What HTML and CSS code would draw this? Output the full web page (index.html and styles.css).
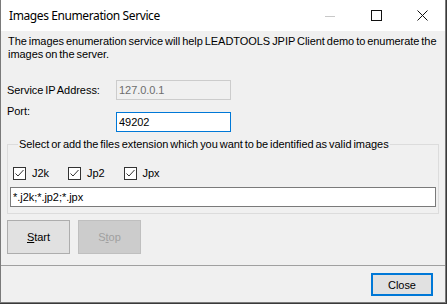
FILE: index.html
```html
<!DOCTYPE html>
<html lang="en">
<head>
  <meta charset="UTF-8">
  <title>Images Enumeration Service</title>
  <link rel="stylesheet" href="styles.css">
</head>
<body>
  <div class="window">
    <div class="titlebar">
      <span class="title">Images Enumeration Service</span>
      <div class="caption-buttons">
        <span class="caption-btn disabled">
          <svg width="10" height="10" viewBox="0 0 10 10"><path d="M0 5.5h10" stroke="currentColor" stroke-width="1"/></svg>
        </span>
        <span class="caption-btn">
          <svg width="11" height="11" viewBox="0 0 11 11"><rect x="0.5" y="0.5" width="10" height="10" fill="none" stroke="currentColor" stroke-width="1"/></svg>
        </span>
        <span class="caption-btn">
          <svg width="11" height="11" viewBox="0 0 11 11"><path d="M0.5 0.5l10 10M10.5 0.5l-10 10" stroke="currentColor" stroke-width="1"/></svg>
        </span>
      </div>
    </div>

    <div class="content">
      <p class="intro">The images enumeration service will help LEADTOOLS JPIP Client demo to enumerate the images on the server.</p>

      <div class="field field-ip">
        <label class="field-label">Service IP Address:</label>
        <input class="text-input disabled" type="text" value="127.0.0.1" disabled>
      </div>

      <div class="field field-port">
        <label class="field-label">Port:</label>
        <input class="text-input focused" type="text" value="49202">
      </div>

      <fieldset class="group">
        <legend>Select or add the files extension which you want to be identified as valid images</legend>
        <div class="checks">
          <label class="check"><span class="box"><svg width="11" height="11" viewBox="0 0 11 11"><path d="M1.5 5.5l2.5 2.5 5.5-6" fill="none" stroke="#333" stroke-width="1"/></svg></span>J2k</label>
          <label class="check"><span class="box"><svg width="11" height="11" viewBox="0 0 11 11"><path d="M1.5 5.5l2.5 2.5 5.5-6" fill="none" stroke="#333" stroke-width="1"/></svg></span>Jp2</label>
          <label class="check"><span class="box"><svg width="11" height="11" viewBox="0 0 11 11"><path d="M1.5 5.5l2.5 2.5 5.5-6" fill="none" stroke="#333" stroke-width="1"/></svg></span>Jpx</label>
        </div>
        <input class="text-input ext-input" type="text" value="*.j2k;*.jp2;*.jpx">
      </fieldset>

      <div class="actions">
        <button class="btn"><u>S</u>tart</button>
        <button class="btn btn-disabled" disabled>S<u>t</u>op</button>
      </div>
    </div>

    <div class="footer">
      <button class="btn btn-close">Close</button>
    </div>
  </div>
</body>
</html>
```

FILE: styles.css
```css
* {
  box-sizing: border-box;
  margin: 0;
  padding: 0;
}

body {
  background-color: #3a3a3a;
  font-family: 'Liberation Sans', Arial, sans-serif;
  font-size: 11px;
  letter-spacing: -0.05px;
  word-spacing: -1px;
  color: #000;
}

.window {
  width: 446px;
  height: 303px;
  background-color: #f0f0f0;
  border: 1px solid #7a7a7a;
  border-top: none;
  display: flex;
  flex-direction: column;
}

/* Title bar */
.titlebar {
  height: 31px;
  background-color: #fff;
  display: flex;
  align-items: center;
  justify-content: space-between;
}

.title {
  padding-left: 8px;
  font-family: 'Noto Sans', 'Open Sans', sans-serif;
  font-size: 12px;
  letter-spacing: -0.4px;
  word-spacing: 0;
  color: #000;
}

.caption-buttons {
  display: flex;
  align-self: stretch;
}

.caption-btn {
  width: 46px;
  display: flex;
  align-items: center;
  justify-content: center;
  color: #111;
}

.caption-btn.disabled {
  color: #c8c8c8;
}

/* Body */
.content {
  flex: 1;
  padding: 4px 6px 0;
}

.intro {
  line-height: 13px;
  padding-left: 1px;
}

.field {
  display: flex;
}

.field-ip {
  margin-top: 19px;
  align-items: center;
}

.field-port {
  margin-top: 5px;
  align-items: flex-start;
}

.field-label {
  width: 109px;
  line-height: 13px;
}

.field-port .text-input {
  margin-top: 7px;
}

.text-input {
  width: 115px;
  height: 20px;
  padding: 0 2px;
  border: 1px solid #7a7a7a;
  background-color: #fff;
  font-family: inherit;
  font-size: 11px;
  letter-spacing: inherit;
  color: #000;
  outline: none;
}

.text-input.disabled {
  background-color: #f0f0f0;
  border-color: #cccccc;
  color: #6d6d6d;
}

.text-input.focused {
  border-color: #0078d7;
}

/* Group box */
.group {
  margin-top: 6px;
  border: 1px solid #dcdcdc;
  padding: 0 2px 6px 2px;
}

.group legend {
  margin-left: 8px;
  padding: 0 1px;
  line-height: 13px;
}

.checks {
  display: flex;
  gap: 19px;
  padding: 16px 0 0 3px;
}

.check {
  display: flex;
  align-items: center;
  gap: 6px;
  line-height: 13px;
}

.box {
  width: 13px;
  height: 13px;
  border: 1px solid #333;
  background-color: #fff;
  display: flex;
  align-items: center;
  justify-content: center;
}

.ext-input {
  width: 426px;
  margin-top: 7px;
  display: block;
}

/* Buttons */
.actions {
  display: flex;
  gap: 8px;
  margin-top: 6px;
}

.btn {
  width: 63px;
  height: 34px;
  background-color: #e1e1e1;
  border: 1px solid #adadad;
  font-family: inherit;
  font-size: 11px;
  letter-spacing: inherit;
  color: #000;
}

.btn-disabled {
  background-color: #cccccc;
  border-color: #bfbfbf;
  color: #a0a0a0;
}

.footer {
  height: 37px;
  border-top: 1px solid #a0a0a0;
  display: flex;
  justify-content: flex-end;
  padding: 7px 12px 0 0;
}

.btn-close {
  width: 62px;
  height: 23px;
  border: 2px solid #0078d7;
}
```
